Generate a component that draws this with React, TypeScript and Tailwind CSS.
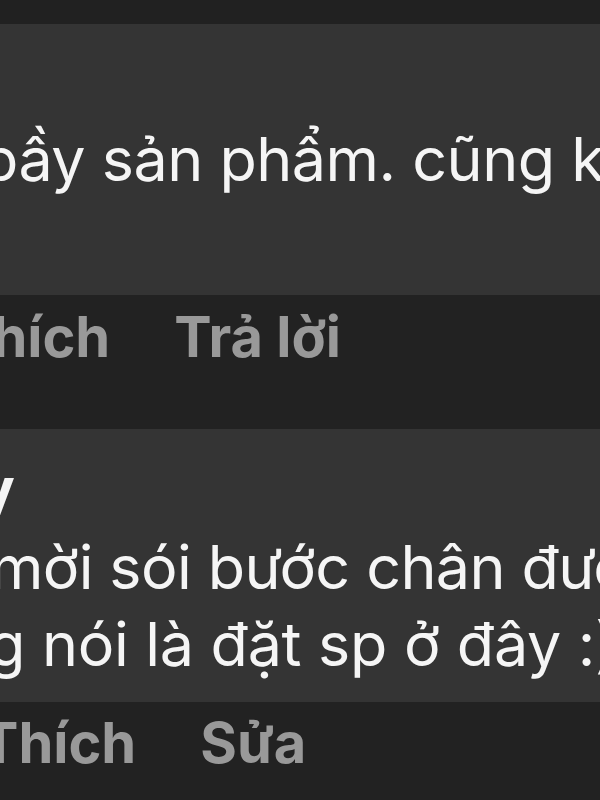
export default function App() {
  const body = { fontFamily: 'Inter, "Noto Sans", "Liberation Sans", sans-serif' };
  return (
    <div className="w-[600px] h-[800px] overflow-hidden bg-[#222222] flex flex-col" style={body}>
      <div className="h-[24px] shrink-0 bg-[#212121]" />
      <div className="h-[271px] shrink-0 bg-[#343434] overflow-hidden pt-[105px]">
        <div className="ml-[-19px] whitespace-nowrap text-[61px] leading-[61px] tracking-[-0.5px] text-[#f5f5f5] font-normal">
          bầy sản phẩm. cũng không
        </div>
      </div>
      <div className="h-[134px] shrink-0 bg-[#222222] overflow-hidden pt-[10px]">
        <div className="ml-[-45px] flex items-center gap-[64px] whitespace-nowrap text-[56px] leading-[64px] font-bold text-[#999999]">
          <span>Thích</span>
          <span>Trả lời</span>
        </div>
      </div>
      <div className="h-[273px] shrink-0 bg-[#343434] overflow-hidden pt-[30px]">
        <div className="ml-[-102px] whitespace-nowrap text-[60px] leading-[60px] font-bold text-[#f5f5f5]">Duy</div>
        <div className="ml-[-10px] mt-[10px] whitespace-nowrap text-[61px] leading-[77px] tracking-[-0.6px] text-[#f5f5f5]">
          mời sói bước chân được
        </div>
        <div className="ml-[-12px] whitespace-nowrap text-[61px] leading-[77px] tracking-[-0.3px] text-[#f5f5f5]">
          g nói là đặt sp ở đây :)
        </div>
      </div>
      <div className="flex-1 bg-[#222222] overflow-hidden pt-[9px]">
        <div className="ml-[-19px] flex items-center gap-[64px] whitespace-nowrap text-[56px] leading-[64px] font-bold text-[#999999]">
          <span>Thích</span>
          <span>Sửa</span>
        </div>
      </div>
    </div>
  );
}
